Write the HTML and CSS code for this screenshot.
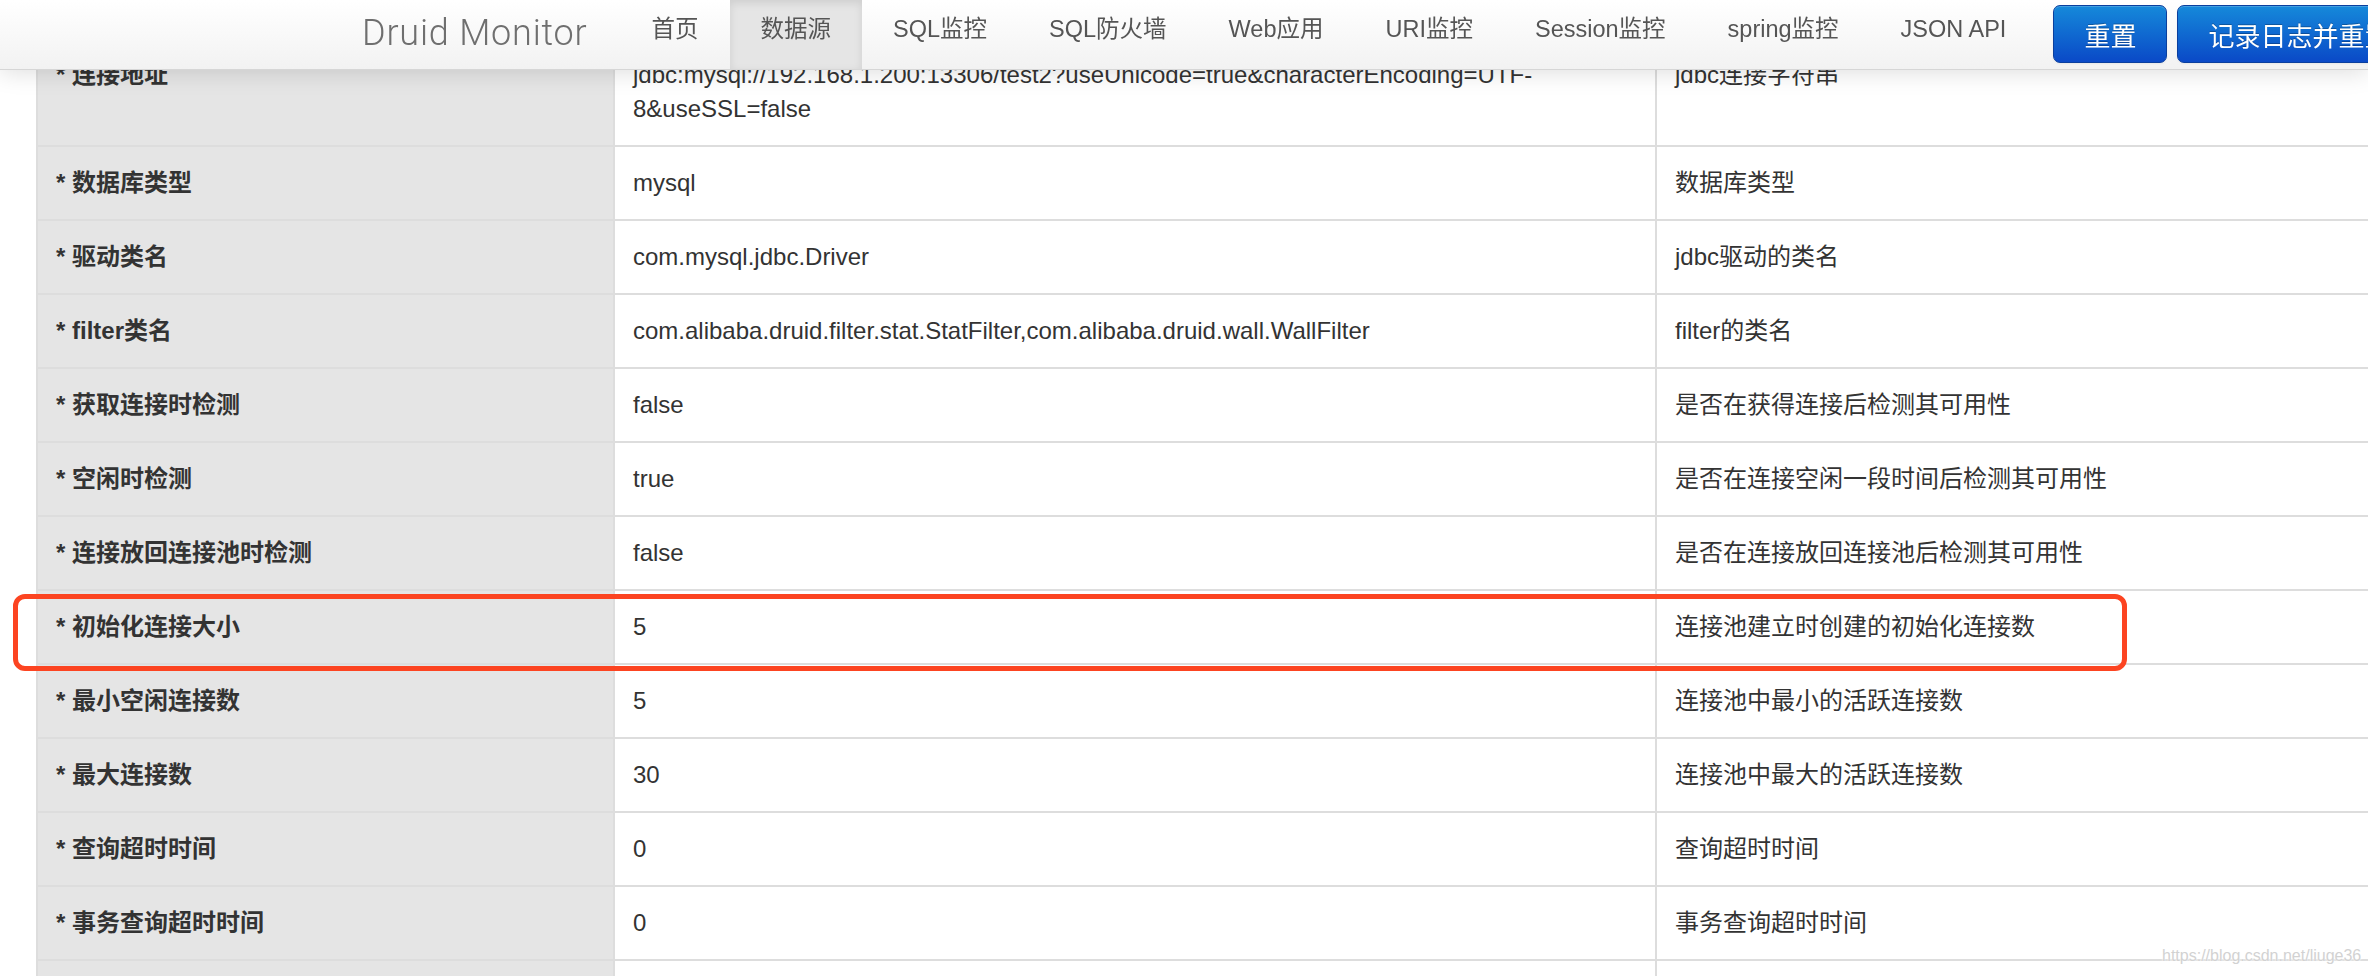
FILE: index.html
```html
<!DOCTYPE html>
<html lang="zh-CN">
<head>
<meta charset="utf-8">
<title>Druid Monitor</title>
<link rel="stylesheet" href="styles.css">
</head>
<body>
<header class="navbar">
  <div class="brand">Druid Monitor</div>
  <nav class="nav">
    <a class="nav-item">首页</a>
    <a class="nav-item active">数据源</a>
    <a class="nav-item">SQL监控</a>
    <a class="nav-item">SQL防火墙</a>
    <a class="nav-item">Web应用</a>
    <a class="nav-item">URI监控</a>
    <a class="nav-item">Session监控</a>
    <a class="nav-item">spring监控</a>
    <a class="nav-item">JSON API</a>
  </nav>
  <div class="actions">
    <button class="btn">重置</button>
    <button class="btn">记录日志并重置</button>
  </div>
</header>

<main class="content">
  <table class="info">
    <colgroup>
      <col class="c1"><col class="c2"><col class="c3">
    </colgroup>
    <tbody>
      <tr><th>* 连接地址</th><td>jdbc:mysql://192.168.1.200:13306/test2?useUnicode=true&amp;characterEncoding=UTF-8&amp;useSSL=false</td><td>jdbc连接字符串</td></tr>
      <tr><th>* 数据库类型</th><td>mysql</td><td>数据库类型</td></tr>
      <tr><th>* 驱动类名</th><td>com.mysql.jdbc.Driver</td><td>jdbc驱动的类名</td></tr>
      <tr><th>* filter类名</th><td>com.alibaba.druid.filter.stat.StatFilter,com.alibaba.druid.wall.WallFilter</td><td>filter的类名</td></tr>
      <tr><th>* 获取连接时检测</th><td>false</td><td>是否在获得连接后检测其可用性</td></tr>
      <tr><th>* 空闲时检测</th><td>true</td><td>是否在连接空闲一段时间后检测其可用性</td></tr>
      <tr><th>* 连接放回连接池时检测</th><td>false</td><td>是否在连接放回连接池后检测其可用性</td></tr>
      <tr><th>* 初始化连接大小</th><td>5</td><td>连接池建立时创建的初始化连接数</td></tr>
      <tr><th>* 最小空闲连接数</th><td>5</td><td>连接池中最小的活跃连接数</td></tr>
      <tr><th>* 最大连接数</th><td>30</td><td>连接池中最大的活跃连接数</td></tr>
      <tr><th>* 查询超时时间</th><td>0</td><td>查询超时时间</td></tr>
      <tr><th>* 事务查询超时时间</th><td>0</td><td>事务查询超时时间</td></tr>
      <tr><th>* 最大等待时间</th><td>-1</td><td>获取连接时最大等待时间</td></tr>
    </tbody>
  </table>
  <div class="highlight"></div>
  <div class="watermark">https://blog.csdn.net/liuge36</div>
</main>
</body>
</html>
```

FILE: styles.css
```css
html, body {
  margin: 0;
  padding: 0;
  overflow: hidden;
  background: #ffffff;
}

body {
  font-family: "Liberation Sans", "Noto Sans CJK SC", sans-serif;
  color: #333333;
  font-size: 24px;
}

.navbar {
  position: fixed;
  top: 0;
  left: 0;
  right: 0;
  height: 70px;
  z-index: 10;
  display: flex;
  align-items: stretch;
  padding-left: 362px;
  background: linear-gradient(#ffffff, #f2f2f2);
  border-bottom: 1px solid #d6d6d6;
  box-shadow: 0 3px 22px rgba(0, 0, 0, 0.13);
  box-sizing: border-box;
  white-space: nowrap;
}

.brand {
  font-family: Roboto, "Liberation Sans", sans-serif;
  font-weight: 300;
  font-size: 36px;
  color: #6f6f6f;
  line-height: 66px;
  margin-right: 33px;
  letter-spacing: 0.8px;
}

.nav {
  display: flex;
  align-items: stretch;
}

.nav-item {
  display: block;
  padding: 12px 31px 0;
  line-height: 34px;
  font-size: 23.5px;
  color: #555555;
  text-decoration: none;
}

.nav-item.active {
  background: #e5e5e5;
  box-shadow: inset 0 3px 8px rgba(0, 0, 0, 0.1);
  color: #555555;
}

.actions {
  display: flex;
  align-items: flex-start;
  gap: 10px;
  margin-left: 16px;
  padding-top: 5px;
}

.btn {
  height: 58px;
  padding: 0 30px;
  font-family: "Liberation Sans", "Noto Sans CJK SC", sans-serif;
  font-size: 26px;
  color: #ffffff;
  background: linear-gradient(#1589da, #0a49c7);
  border: 1px solid #0a3f9e;
  border-radius: 7px;
  text-shadow: 0 -1px 0 rgba(0, 0, 0, 0.25);
  box-shadow: inset 0 1px 0 rgba(255, 255, 255, 0.2), 0 1px 2px rgba(0, 0, 0, 0.05);
  white-space: nowrap;
}

.content {
  position: relative;
  padding-top: 37px;
  padding-left: 36px;
}

.info {
  width: 2500px;
  border-collapse: collapse;
  table-layout: fixed;
}

.c1 { width: 577px; }
.c2 { width: 1042px; }
.c3 { width: 881px; }

.info th,
.info td {
  padding: 19px 17px 19px 18px;
  line-height: 34px;
  font-size: 24px;
  text-align: left;
  vertical-align: top;
  border-top: 2px solid #dddddd;
  border-left: 2px solid #dddddd;
  color: #333333;
}

.info th {
  background: #e5e5e5;
  font-weight: bold;
  color: #333333;
}

.info td {
  background: #ffffff;
}

.highlight {
  position: absolute;
  left: 13px;
  top: 594px;
  width: 2114px;
  height: 77px;
  border: 5px solid #fc4421;
  border-radius: 12px;
  box-sizing: border-box;
}

.watermark {
  position: absolute;
  left: 2162px;
  top: 947px;
  font-size: 16px;
  color: #d2d2d2;
  text-shadow: 0 0 2px #ffffff, 0 0 2px #ffffff;
  white-space: nowrap;
}
```
